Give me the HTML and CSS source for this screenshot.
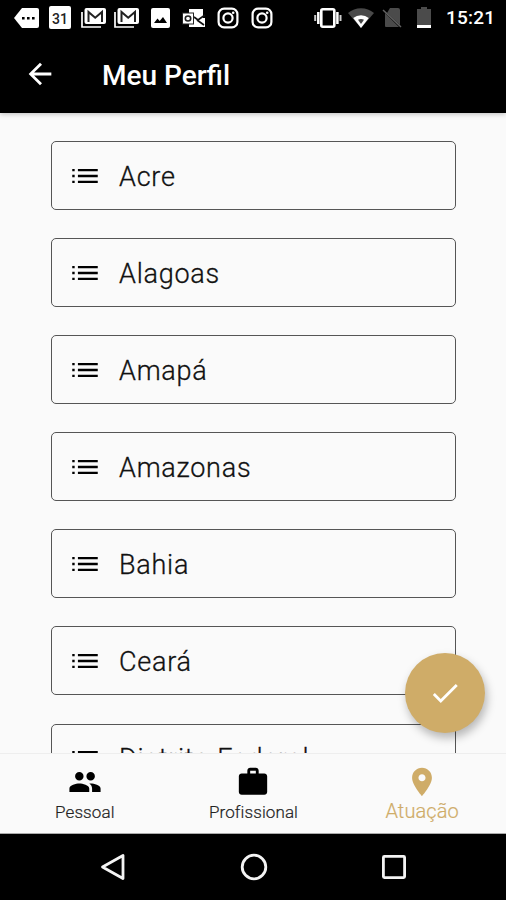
FILE: index.html
```html
<!DOCTYPE html>
<html lang="pt-BR">
<head>
<meta charset="utf-8">
<title>Meu Perfil</title>
<link rel="stylesheet" href="styles.css">
</head>
<body>
<svg class="defs" aria-hidden="true">
  <symbol id="list" viewBox="0 0 24 24"><path d="M3 12.8h1.7v-1.6H3zm0 4.1h1.7v-1.6H3zm0-8.2h1.7V7.1H3zm4 4.1h14v-1.6H7zm0 4.1h14v-1.6H7zM7 7.1v1.6h14V7.1z"/></symbol>
  <symbol id="mail" viewBox="0 0 26 22"><path d="M1 5v15h19" fill="none" stroke="#fff" stroke-width="1.7"/><rect x="3.5" y="1" width="21.5" height="16" rx="2" fill="#fff"/><path d="M7.5 15V5l6.7 5.8L21 5v10" fill="none" stroke="#222" stroke-width="2"/></symbol>
  <symbol id="insta" viewBox="0 0 22 22"><rect x="1.6" y="1.6" width="18.8" height="18.8" rx="5.5" fill="none" stroke="#fff" stroke-width="2.2"/><circle cx="11" cy="11" r="4.6" fill="none" stroke="#fff" stroke-width="2.2"/><circle cx="16.2" cy="5.8" r="1.3" fill="#fff"/></symbol>
</svg>
<div class="screen">
  <div class="status">
    <div class="notifications">
      <svg width="25" height="20" viewBox="0 0 25 20"><path d="M8 0h15a2 2 0 0 1 2 2v16a2 2 0 0 1-2 2H8L0 10z" fill="#fff"/><path d="M8 9h2.6v2.6H8zm5 0h2.6v2.6H13zm5 0h2.6v2.6H18z"/></svg>
      <span class="calendar">31</span>
      <svg class="mail" width="26" height="22"><use href="#mail"/></svg>
      <svg class="mail second" width="26" height="22"><use href="#mail"/></svg>
      <svg class="photo" width="19" height="20" viewBox="0 0 19 20"><rect width="19" height="20" rx="2" fill="#fff"/><path d="M3 15l3.5-4.5 2.2 2.4 3.3-4L16 15z"/></svg>
      <svg class="outlook" width="24" height="20" viewBox="0 0 24 20"><path d="M7 1h14v9h2v9H7z" fill="#fff"/><path d="M12 9l4 3 7-5M15 12l7 5" fill="none" stroke="#111" stroke-width="1.7"/><rect x=".5" y="5" width="11" height="11" fill="#fff" stroke="#222"/><ellipse cx="6" cy="10.5" rx="2.7" ry="2.5" fill="none" stroke="#222" stroke-width="1.6"/></svg>
      <svg class="insta" width="22" height="22"><use href="#insta"/></svg>
      <svg class="insta second" width="22" height="22"><use href="#insta"/></svg>
    </div>
    <div class="system">
      <svg width="28" height="20" viewBox="0 0 28 20"><rect x="7.3" y="1.3" width="13" height="17.4" rx="1.5" fill="none" stroke="#fff" stroke-width="2.6"/><path d="M4.3 4v12M23.4 4v12" stroke="#fff" stroke-width="2.5"/><path d="M1.2 7v6M26.5 7v6" stroke="#ccc" stroke-width="2"/></svg>
      <svg class="wifi" width="26" height="20" viewBox="0 0 26 20"><path d="M0 5a20 20 0 0 1 26 0L13 20z" fill="#494949"/><path d="M5.2 10a12.5 12.5 0 0 1 15.6 0L13 20z" fill="#fff"/><path d="M10 11.7q3-1.2 6 0L13 16z" fill="#444"/></svg>
      <svg class="sim" width="20" height="21" viewBox="0 0 20 21"><path d="M8 1h8a2 2 0 0 1 2 2v15L5 6zM3 6l14 14H4a1 1 0 0 1-1-1z" fill="#4b4b4b"/><path d="M1 3l18 17" stroke="#626262" stroke-width="1.5"/></svg>
      <svg class="battery" width="14" height="21" viewBox="0 0 14 21"><path d="M4 0h6v2h4v16H0V2h4z" fill="#4b4b4b"/><path d="M0 18h14v3H0z" fill="#fff"/></svg>
      <span class="time">15:21</span>
    </div>
  </div>
  <header class="appbar">
    <svg width="34" height="34" viewBox="0 0 24 24"><path d="M20 11H7.83l5.59-5.59L12 4l-8 8 8 8 1.41-1.41L7.83 13H20v-2z" fill="#fff"/></svg>
    <h1>Meu Perfil</h1>
  </header>
  <main class="content">
    <div class="item"><svg><use href="#list"/></svg><span>Acre</span></div>
    <div class="item"><svg><use href="#list"/></svg><span>Alagoas</span></div>
    <div class="item"><svg><use href="#list"/></svg><span>Amapá</span></div>
    <div class="item"><svg><use href="#list"/></svg><span>Amazonas</span></div>
    <div class="item"><svg><use href="#list"/></svg><span>Bahia</span></div>
    <div class="item"><svg><use href="#list"/></svg><span>Ceará</span></div>
    <div class="item"><svg><use href="#list"/></svg><span>Distrito Federal</span></div>
  </main>
  <button class="fab" aria-label="Confirmar"><svg width="34" height="34" viewBox="0 0 24 24"><path d="M9 16.17L4.83 12l-1.42 1.41L9 19 21 7l-1.41-1.41z" fill="#fff"/></svg></button>
  <nav class="tabs">
    <div class="tab"><svg viewBox="0 0 24 24"><path d="M16 11c1.66 0 2.99-1.34 2.99-3S17.66 5 16 5c-1.66 0-3 1.34-3 3s1.34 3 3 3zm-8 0c1.66 0 2.99-1.34 2.99-3S9.66 5 8 5C6.34 5 5 6.34 5 8s1.34 3 3 3zm0 2c-2.33 0-7 1.17-7 3.5V19h14v-2.5c0-2.33-4.67-3.5-7-3.5zm8 0c-.29 0-.62.02-.97.05 1.16.84 1.97 1.97 1.97 3.45V19h6v-2.5c0-2.33-4.67-3.5-7-3.5z"/></svg><span>Pessoal</span></div>
    <div class="tab"><svg viewBox="0 0 24 24"><path d="M20 6h-4V4c0-1.11-.89-2-2-2h-4c-1.11 0-2 .89-2 2v2H4c-1.11 0-1.99.89-1.99 2L2 19c0 1.11.89 2 2 2h16c1.11 0 2-.89 2-2V8c0-1.11-.89-2-2-2zm-6 0h-4V4h4v2z"/></svg><span>Profissional</span></div>
    <div class="tab active"><svg viewBox="0 0 24 24"><path d="M12 2C8.13 2 5 5.13 5 9c0 5.25 7 13 7 13s7-7.75 7-13c0-3.87-3.13-7-7-7zm0 9.5c-1.38 0-2.5-1.12-2.5-2.5s1.12-2.5 2.5-2.5 2.5 1.12 2.5 2.5-1.12 2.5-2.5 2.5z"/></svg><span>Atuação</span></div>
  </nav>
  <div class="system-nav">
    <svg viewBox="0 0 30 30"><path d="M25 3.5v23L4.5 15z" fill="none" stroke="#f4f4f4" stroke-width="2.8" stroke-linejoin="round"/></svg>
    <svg viewBox="0 0 30 30"><circle cx="15" cy="15" r="11.8" fill="none" stroke="#f4f4f4" stroke-width="2.8"/></svg>
    <svg viewBox="0 0 30 30"><rect x="4.4" y="4.4" width="21.2" height="21.2" rx="1" fill="none" stroke="#f4f4f4" stroke-width="2.8"/></svg>
  </div>
</div>
</body>
</html>
```
FILE: styles.css
```css
* { box-sizing: border-box; }
body { margin: 0; font-family: Roboto, sans-serif; color: #111; }
svg { display: block; flex: none; }
.defs { position: absolute; width: 0; height: 0; }
.screen { position: relative; width: 506px; height: 900px; display: flex; flex-direction: column; overflow: hidden; background: #fafafa; }
.status { height: 36px; flex: none; display: flex; justify-content: space-between; background: #000; padding: 0 11px 0 14px; }
.notifications, .system { display: flex; align-items: center; height: 35px; }
.calendar { width: 22px; height: 23px; margin-left: 10px; padding-top: 5px; border-radius: 2px; background: #fff; color: #222; font-size: 14px; line-height: 17px; font-weight: 500; text-align: center; }
.mail { margin-left: 10px; }
.mail.second { margin-left: 7px; }
.photo { margin-left: 11px; }
.outlook { margin-left: 12px; }
.insta { margin-left: 11px; }
.insta.second { margin-left: 12px; }
.wifi { margin-left: 6px; }
.sim { margin-left: 8px; }
.battery { margin-left: 15px; }
.time { width: 49px; margin: 1px 0 0 15px; color: #fff; font-size: 19px; font-weight: 500; line-height: 24px; letter-spacing: .2px; white-space: nowrap; }
.appbar { position: relative; z-index: 1; height: 77px; flex: none; display: flex; align-items: center; padding: 0 0 1px 23px; background: #000; box-shadow: 0 1px 5px rgba(0,0,0,.25); }
.appbar h1 { margin: 3px 0 0 45px; color: #fff; font-size: 28px; line-height: 34px; font-weight: 500; }
.content { flex: 1; min-height: 0; overflow: hidden; display: flex; flex-direction: column; gap: 28.1px; padding: 28px 50px 0 51px; }
.item { height: 69px; flex: none; display: flex; align-items: center; padding-left: 16px; border: 1.4px solid #555; border-radius: 5px; }
.item svg { width: 34px; height: 34px; }
.item span { margin: 2px 0 0 17px; font-size: 27px; line-height: 34px; font-weight: 300; letter-spacing: .75px; -webkit-text-stroke: .3px #111; }
.fab { position: absolute; left: 405px; top: 653px; width: 80px; height: 80px; display: flex; align-items: center; justify-content: center; padding: 0; border: 0; border-radius: 50%; background: #cfac68; box-shadow: 2px 5px 10px rgba(0,0,0,.28); }
.tabs { height: 81px; flex: none; display: grid; grid-template-columns: repeat(3, 1fr); border-top: 1px solid #eee; border-bottom: 1px solid #aaa; background: #fafafa; }
.tab { display: flex; flex-direction: column; align-items: center; padding: 11px 0 0 1px; color: #222; font-size: 17px; font-weight: 300; }
.tab svg { width: 34px; height: 34px; fill: #000; }
.tab span { line-height: 24px; margin-top: 1px; letter-spacing: .1px; -webkit-text-stroke: .2px currentColor; }
.tab.active { color: #cfac68; font-size: 20px; }
.tab.active svg { fill: #cfac68; }
.tab.active span { margin-top: 0; }
.system-nav { height: 66px; flex: none; display: flex; justify-content: space-between; align-items: center; padding: 0 97px 0 98px; background: #000; }
.system-nav svg { width: 30px; height: 30px; }
```
